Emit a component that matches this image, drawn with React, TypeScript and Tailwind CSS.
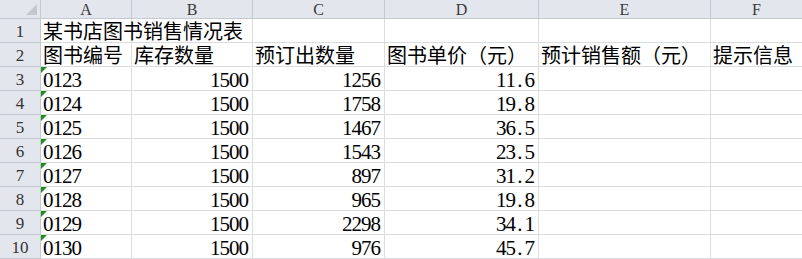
import React from "react";

const cols = ["A", "B", "C", "D", "E", "F"];
const widths = ["w-[91px]", "w-[121px]", "w-[132px]", "w-[154px]", "w-[172px]", "w-[92px]"];

type Cell = { t: string; align?: "l" | "r"; tri?: boolean; num?: boolean };

const data = [
  ["0123", "1500", "1256", "11.6"],
  ["0124", "1500", "1758", "19.8"],
  ["0125", "1500", "1467", "36.5"],
  ["0126", "1500", "1543", "23.5"],
  ["0127", "1500", "897", "31.2"],
  ["0128", "1500", "965", "19.8"],
  ["0129", "1500", "2298", "34.1"],
  ["0130", "1500", "976", "45.7"],
];

const rows: Cell[][] = [
  [{ t: "某书店图书销售情况表" }, { t: "" }, { t: "" }, { t: "" }, { t: "" }, { t: "" }],
  [
    { t: "图书编号" },
    { t: "库存数量" },
    { t: "预订出数量" },
    { t: "图书单价（元）" },
    { t: "预计销售额（元）" },
    { t: "提示信息" },
  ],
  ...data.map((r) => [
    { t: r[0], tri: true, num: true },
    { t: r[1], align: "r" as const, num: true },
    { t: r[2], align: "r" as const, num: true },
    { t: r[3], align: "r" as const, num: true },
    { t: "" },
    { t: "" },
  ]),
];

const font = { fontFamily: '"Liberation Serif", "Noto Sans CJK SC", serif' };

function Num({ s }: { s: string }) {
  return (
    <span className="inline-flex text-[21px] leading-none">
      {s.split("").map((ch, i) => (
        <span key={i} className="inline-block w-[9.5px] text-center">
          {ch}
        </span>
      ))}
    </span>
  );
}

export default function App() {
  return (
    <div className="w-[802px] h-[259px] overflow-hidden bg-white text-black" style={font}>
      <div className="flex h-[19px]">
        <div className="relative w-[41px] shrink-0 bg-[#e3e7ed] border-r border-b border-[#c3c9d1]">
          <div className="absolute right-[3px] bottom-[3px] w-0 h-0 border-b-[11px] border-l-[11px] border-b-[#c3c8cf] border-l-transparent" />
        </div>
        {cols.map((c, i) => (
          <div
            key={c}
            className={`${widths[i]} shrink-0 bg-[#e3e7ed] border-r border-b border-[#c3c9d1] flex items-center justify-center text-[16px] leading-none text-[#3a3a3a] pt-[1px]`}
          >
            {c}
          </div>
        ))}
      </div>
      {rows.map((row, ri) => (
        <div key={ri} className="flex h-[24px]">
          <div className="w-[41px] shrink-0 bg-[#e3e7ed] border-r border-b border-[#c3c9d1] flex items-center justify-center text-[17px] leading-none text-[#333] pt-[2px]">
            {ri + 1}
          </div>
          {row.map((cell, ci) => (
            <div
              key={ci}
              className={`${widths[ci]} relative shrink-0 border-r border-b border-[#dadcdd] flex items-center ${
                cell.align === "r" ? "justify-end pr-[4px]" : "justify-start pl-[2px]"
              } text-[20px] leading-none whitespace-nowrap ${ci === 0 && ri === 0 ? "overflow-visible" : "overflow-hidden"} pt-[3px]`}
            >
              {cell.tri && (
                <div className="absolute left-0 top-0 w-0 h-0 border-t-[6px] border-r-[6px] border-t-[#1f8f1f] border-r-transparent" />
              )}
              {cell.num ? (
                <Num s={cell.t} />
              ) : (
                <span className={ci === 0 && ri === 0 ? "relative z-10" : ""}>{cell.t}</span>
              )}
            </div>
          ))}
        </div>
      ))}
    </div>
  );
}
